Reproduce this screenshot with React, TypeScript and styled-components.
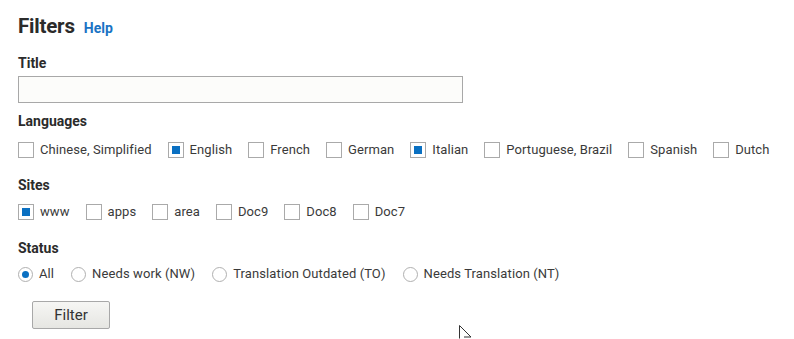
import React, { useState } from "react";
import styled, { createGlobalStyle } from "styled-components";

const Global = createGlobalStyle`
  html, body { margin: 0; padding: 0; background: #fff; }
  body { font-family: Roboto, "Liberation Sans", Arial, sans-serif; color: #333; }
  * { box-sizing: border-box; }
`;

const Page = styled.div`
  position: relative;
  width: 794px;
  height: 339px;
  padding: 14px 0 0 18px;
  display: flex;
  flex-direction: column;
`;

const HeaderRow = styled.div`
  display: flex;
  align-items: baseline;
  gap: 9px;
  height: 25px;
`;

const Heading = styled.h2`
  margin: 0;
  font-size: 20.5px;
  font-weight: 700;
  color: #2b2b2b;
  letter-spacing: -0.2px;
`;

const HelpLink = styled.a`
  font-size: 14px;
  font-weight: 700;
  color: #1a73c4;
  text-decoration: none;
`;

const Section = styled.div<{ $top: number }>`
  display: flex;
  flex-direction: column;
  margin-top: ${(p) => p.$top}px;
`;

const Label = styled.div`
  font-size: 14px;
  font-weight: 700;
  color: #2b2b2b;
  line-height: 15px;
  height: 15px;
`;

const TitleInput = styled.input`
  margin-top: 5px;
  width: 445px;
  height: 27px;
  border: 1px solid #a8a8a8;
  background: #fcfcfa;
  outline: none;
`;

const OptionRow = styled.div<{ $top: number }>`
  display: flex;
  align-items: center;
  gap: 16px;
  margin-top: ${(p) => p.$top}px;
`;

const Option = styled.label`
  display: flex;
  align-items: center;
  gap: 6px;
  font-size: 13px;
  letter-spacing: 0.08px;
  color: #3a3a3a;
  cursor: pointer;
  line-height: 16px;
`;

const Box = styled.span<{ $checked: boolean }>`
  width: 16px;
  height: 16px;
  border: 1px solid #aaa;
  background: #fff;
  display: flex;
  align-items: center;
  justify-content: center;
  &::after {
    content: "";
    width: 8px;
    height: 8px;
    background: ${(p) => (p.$checked ? "#0a70c2" : "transparent")};
  }
`;

const RadioRow = styled(OptionRow)`
  gap: 17px;
`;

const RadioOption = styled(Option)`
  gap: 6px;
  letter-spacing: 0.1px;
`;

const Circle = styled.span<{ $checked: boolean }>`
  width: 15px;
  height: 15px;
  border-radius: 50%;
  border: 1px solid #b0b0b0;
  background: #fff;
  display: flex;
  align-items: center;
  justify-content: center;
  &::after {
    content: "";
    width: 7px;
    height: 7px;
    border-radius: 50%;
    background: ${(p) => (p.$checked ? "#0a70c2" : "transparent")};
  }
`;

const FilterButton = styled.button`
  margin: 19px 0 0 14px;
  width: 78px;
  height: 28px;
  border: 1px solid #a8a8a8;
  border-radius: 2px;
  background: linear-gradient(#f6f6f4, #e6e6e2);
  font-family: Roboto, "Liberation Sans", Arial, sans-serif;
  font-size: 15px;
  color: #333;
  align-self: flex-start;
`;

const Cursor = styled.svg`
  position: absolute;
  left: 459px;
  top: 325px;
`;

const languages: [string, boolean][] = [
  ["Chinese, Simplified", false],
  ["English", true],
  ["French", false],
  ["German", false],
  ["Italian", true],
  ["Portuguese, Brazil", false],
  ["Spanish", false],
  ["Dutch", false],
];

const sites: [string, boolean][] = [
  ["www", true],
  ["apps", false],
  ["area", false],
  ["Doc9", false],
  ["Doc8", false],
  ["Doc7", false],
];

const statuses = [
  "All",
  "Needs work (NW)",
  "Translation Outdated (TO)",
  "Needs Translation (NT)",
];

export default function App() {
  const [status] = useState("All");
  return (
    <>
      <Global />
      <Page>
        <HeaderRow>
          <Heading>Filters</Heading>
          <HelpLink href="#">Help</HelpLink>
        </HeaderRow>

        <Section $top={17}>
          <Label>Title</Label>
          <TitleInput type="text" />
        </Section>

        <Section $top={11}>
          <Label>Languages</Label>
          <OptionRow $top={13}>
            {languages.map(([name, on]) => (
              <Option key={name}>
                <Box $checked={on} />
                {name}
              </Option>
            ))}
          </OptionRow>
        </Section>

        <Section $top={20}>
          <Label>Sites</Label>
          <OptionRow $top={11}>
            {sites.map(([name, on]) => (
              <Option key={name}>
                <Box $checked={on} />
                {name}
              </Option>
            ))}
          </OptionRow>
        </Section>

        <Section $top={21}>
          <Label>Status</Label>
          <RadioRow $top={10}>
            {statuses.map((s) => (
              <RadioOption key={s}>
                <Circle $checked={s === status} />
                {s}
              </RadioOption>
            ))}
          </RadioRow>
        </Section>

        <FilterButton>Filter</FilterButton>

        <Cursor width="13" height="14" viewBox="0 0 13 14">
          <path d="M0.5 0.5 L0.5 13.5 M0.5 0.5 L12 12 L5 12" fill="none" stroke="#333" strokeWidth="1" />
        </Cursor>
      </Page>
    </>
  );
}
